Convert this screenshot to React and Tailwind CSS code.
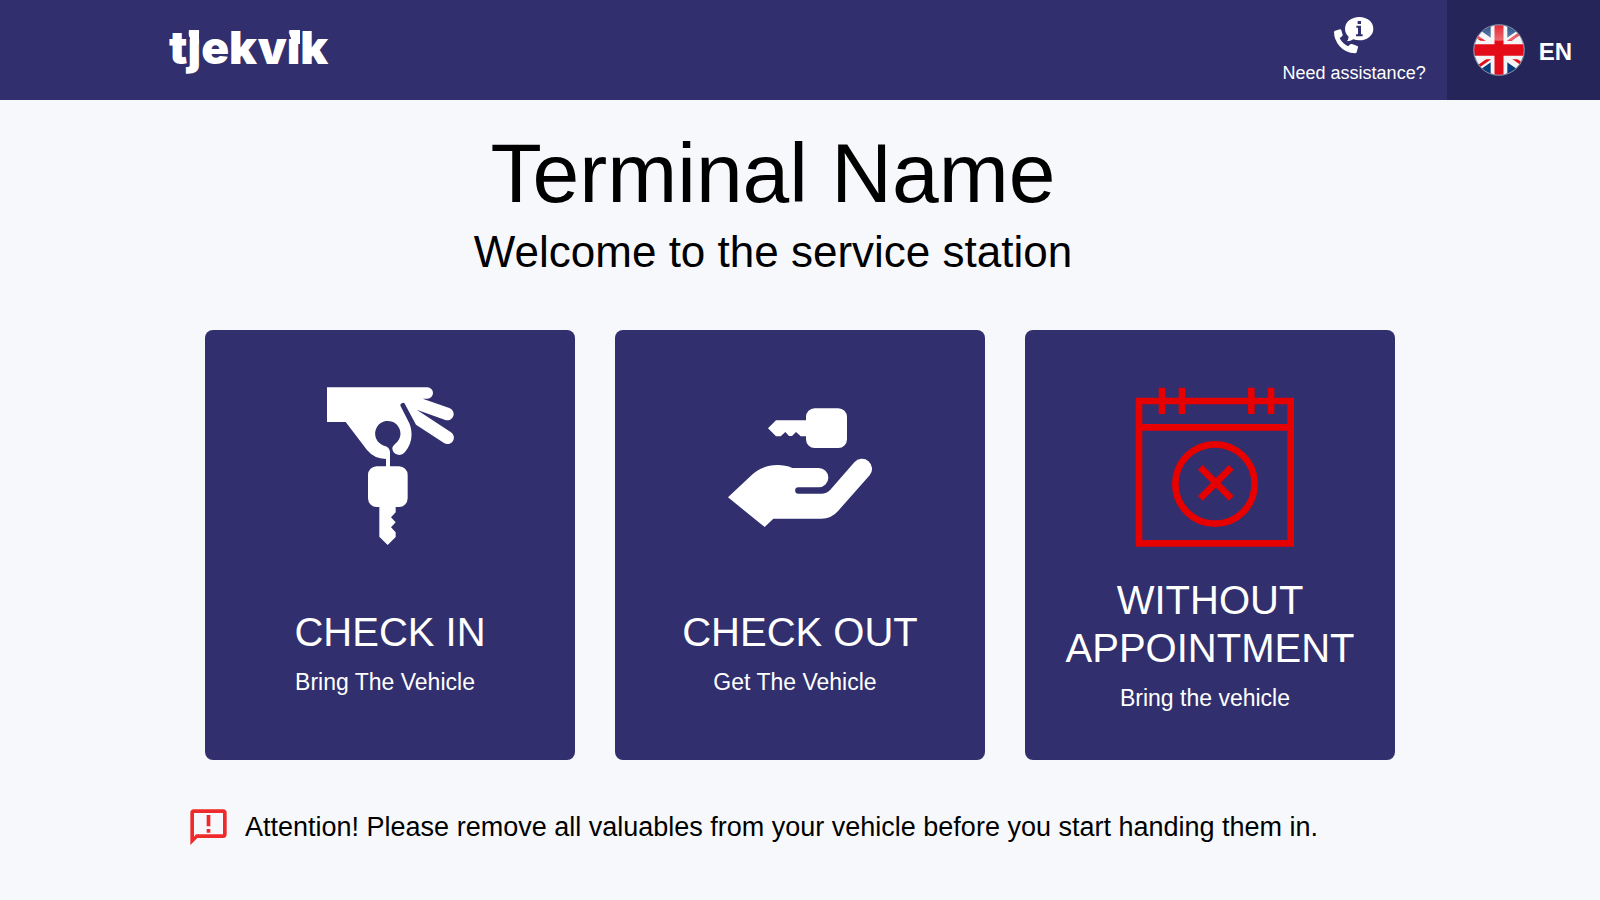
function Logo() {
  return (
    <a href="#home" className="block text-white">
      <svg viewBox="0 0 170 60" className="block h-[60px] w-[170px]" fill="currentColor" role="img" aria-label="tjekvik">
        <clipPath id="logo-cap">
          <rect y="10" width="170" height="50" />
        </clipPath>
        <text x="1" y="44" clipPath="url(#logo-cap)" className="font-['Inter',sans-serif] text-[46px] font-black">
          tjekvik
        </text>
        <path d="M21 10 H31 V24 H22 V18 Q20 15 21 10 Z" />
        <path d="M122 10 H132 V24 H123 V18 Q121 15 122 10 Z" />
      </svg>
    </a>
  );
}

function AssistanceIcon() {
  return (
    <svg viewBox="0 0 120 111" className="h-[37px] w-10" fill="currentColor" aria-hidden="true">
      <path d="M3 41 L18 37 Q21 37 22 40 L26 53 Q26 56 24 58 L17 64 Q26 80 42 88 L49 82 Q51 80 54 81 L70 87 Q73 88 72 91 L68 106 Q67 109 63 109 Q34 108 17 88 Q0 68 0 45 Q0 42 3 41 Z" />
      <path
        fillRule="evenodd"
        d="M76 0 C100 0 118 15 118 35 C118 55 100 70 76 70 Q66 70 58 67 Q50 73 38 73 Q43 69 44 59 Q33 49 33 35 C33 15 52 0 76 0 Z M71 12 h10 v9 h-10 Z M67 26 h14 v26 h5 v6 h-20 v-6 h6 v-20 h-5 Z"
      />
    </svg>
  );
}

function FlagUK() {
  return (
    <svg viewBox="0 0 156 156" className="size-13" aria-hidden="true">
      <defs>
        <clipPath id="flag-disc">
          <circle cx="78" cy="78" r="75" />
        </clipPath>
        <linearGradient id="flag-gloss" x1="0" y1="0" x2="0" y2="1">
          <stop offset="0" stopColor="#fff" stopOpacity="0.1" />
          <stop offset="1" stopColor="#fff" stopOpacity="0.4" />
        </linearGradient>
      </defs>
      <g clipPath="url(#flag-disc)">
        <rect width="156" height="156" fill="#073b7c" />
        <path d="M-22 8 L178 148 M178 8 L-22 148" stroke="#f4f4f6" strokeWidth="32" />
        <path d="M-22 14 L78 84 M178 2 L78 72 M78 72 L178 142 M78 84 L-22 154" stroke="#e30b17" strokeWidth="9" />
        <path d="M78 0 V156" stroke="#f4f4f6" strokeWidth="50" />
        <path d="M0 78 H156" stroke="#f4f4f6" strokeWidth="56" />
        <path d="M78 0 V156" stroke="#e30b17" strokeWidth="27" />
        <path d="M0 78 H156" stroke="#e30b17" strokeWidth="34" />
        <path d="M0 0 H156 V42 Q78 58 0 42 Z" fill="url(#flag-gloss)" />
      </g>
      <circle cx="78" cy="78" r="76" fill="none" stroke="#8e93a8" strokeWidth="3" />
    </svg>
  );
}

function HandKeyIcon() {
  return (
    <svg viewBox="-30 30 540 510" className="h-[170px] w-[180px]" fill="#fff" aria-hidden="true">
      <path d="M51 52 H352 A17 17 0 0 1 352 86 H338 L418 114 A18 18 0 0 1 406 150 L320 119 L423 187 A18 18 0 0 1 402 219 L318 164 L285 103 A7 7 0 0 0 272 109 L298 160 C310 190 306 222 285 246 A21 21 0 0 1 247 233 Q248 228 255 222 A38 38 0 1 0 222 227 Q238 230 240 245 V289 H267 A26 26 0 0 1 293 315 V385 A26 26 0 0 1 267 411 H257 V427 L243 442 L257 457 L243 472 L257 487 V501 L233 525 L208 500 V411 H200 A26 26 0 0 1 174 385 V315 A26 26 0 0 1 200 289 H228 V267 Q192 266 171 240 L107 156 H51 Z" />
    </svg>
  );
}

function KeyHandIcon() {
  return (
    <svg viewBox="0 -30 540 510" className="h-[170px] w-[180px]" fill="#fff" aria-hidden="true">
      <path d="M174 115 L198 91 H288 V81 A26 26 0 0 1 314 55 H385 A26 26 0 0 1 411 81 V148 A26 26 0 0 1 385 174 H314 A26 26 0 0 1 288 148 V139 H272 L258 126 L246 138 H237 L226 126 L212 139 H198 Z" />
      <path d="M54 322 L126 254 C158 224 208 218 247 234 H326 A29 29 0 0 1 326 292 H265 A9 9 0 0 0 265 311 H334 Q350 311 361 299 L433 217 A30 30 0 0 1 479 256 L385 362 Q364 386 334 386 H190 L164 411 Z" />
    </svg>
  );
}

function CalendarCrossIcon() {
  return (
    <svg viewBox="0 30 540 510" className="h-[170px] w-[180px]" fill="none" stroke="#e60000" strokeWidth="20" aria-hidden="true">
      <path d="M57 93 H512 V520 H57 Z M57 172 H512" />
      <path d="M126 53 V132 M186 53 V132 M394 53 V132 M453 53 V132" />
      <circle cx="285" cy="342" r="119" />
      <path d="M241 292 L334 385 M334 292 L241 385" />
    </svg>
  );
}

function AttentionIcon() {
  return (
    <svg viewBox="51 42 132 132" className="size-11 shrink-0" fill="#ee2a2a" aria-hidden="true">
      <path
        fillRule="evenodd"
        d="M72 55 H159 Q170 55 170 66 V130 Q170 141 159 141 H82 L61 162 V66 Q61 55 72 55 Z M72 66 V137 L78 130 H159 V66 Z"
      />
      <path d="M110 72 H121 V106 H110 Z M110 114 H121 V125 H110 Z" />
    </svg>
  );
}

const cards = [
  { title: "CHECK IN", subtitle: "Bring The Vehicle", Icon: HandKeyIcon, textClass: "pt-[58px]" },
  { title: "CHECK OUT", subtitle: "Get The Vehicle", Icon: KeyHandIcon, textClass: "pt-[58px]" },
  { title: "WITHOUT APPOINTMENT", subtitle: "Bring the vehicle", Icon: CalendarCrossIcon, textClass: "pt-[26px]" },
];

function ActionCard({ title, subtitle, Icon, textClass }) {
  return (
    <button type="button" className="flex min-h-[430px] flex-col items-center rounded-lg bg-[#312f6d] px-8 pt-[50px] text-white">
      <Icon />
      <span className={`flex flex-col items-center gap-2 ${textClass}`}>
        <span className="text-[40px] leading-12">{title}</span>
        <span className="pr-2.5 text-[23px] leading-9">{subtitle}</span>
      </span>
    </button>
  );
}

export default function App() {
  return (
    <div className="min-h-screen bg-[#f7f8fc] font-['Liberation_Sans',Arial,sans-serif] text-black">
      <header className="flex h-25 items-stretch bg-[#312f6d] text-white">
        <div className="flex flex-1 items-center pl-42">
          <Logo />
        </div>
        <button type="button" className="flex flex-col items-center px-[21px] pt-[17px]">
          <AssistanceIcon />
          <span className="mt-[7px] text-lg leading-6">Need assistance?</span>
        </button>
        <button type="button" className="flex items-center gap-3.5 bg-[#262559] pr-7 pl-[26px]">
          <FlagUK />
          <span className="pt-1 text-2xl font-bold">EN</span>
        </button>
      </header>

      <main className="mx-auto max-w-[1190px]">
        <div className="pt-[25px] pr-[54px] text-center">
          <h1 className="text-[84px] leading-24">Terminal Name</h1>
          <p className="text-[44px] leading-[62px]">Welcome to the service station</p>
        </div>
        <div className="mt-[47px] grid grid-cols-3 gap-10">
          {cards.map((card) => (
            <ActionCard key={card.title} {...card} />
          ))}
        </div>
      </main>

      <p className="mx-auto mt-[45px] flex max-w-[1226px] items-center gap-3.5 text-[27px] leading-11">
        <AttentionIcon />
        Attention! Please remove all valuables from your vehicle before you start handing them in.
      </p>
    </div>
  );
}
